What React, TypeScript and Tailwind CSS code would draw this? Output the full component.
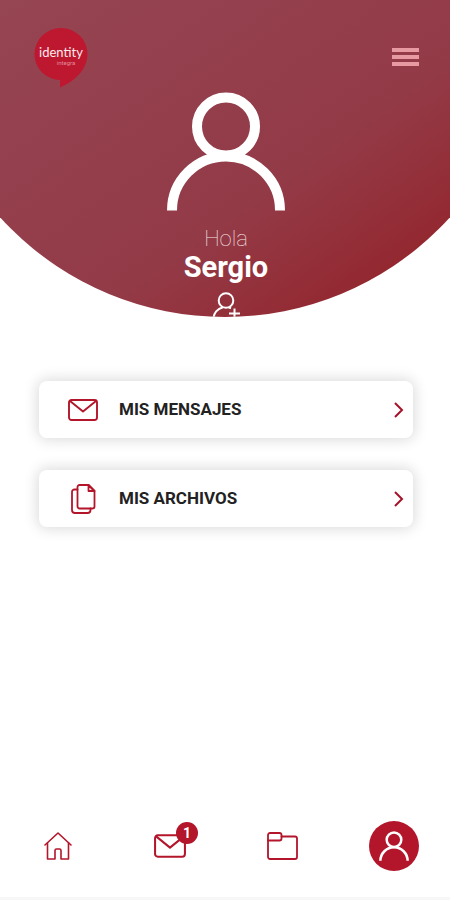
import type { ReactNode } from "react";

const MailIcon = ({ className }: { className?: string }) => (
  <svg viewBox="0 0 30 22" fill="none" stroke="currentColor" strokeWidth="1.9" strokeLinejoin="round" strokeLinecap="round" className={className} aria-hidden="true">
    <rect x="1" y="1" width="28" height="20" rx="2.5" />
    <path d="M2 2l13 10.5L28 2" />
  </svg>
);

const FilesIcon = ({ className }: { className?: string }) => (
  <svg viewBox="0 0 25 30" fill="none" stroke="currentColor" strokeWidth="1.8" strokeLinejoin="round" strokeLinecap="round" className={className} aria-hidden="true">
    <path d="M8.500 1h9l6 6v15.500a2 2 0 0 1-2 2h-13a2 2 0 0 1-2-2V3a2 2 0 0 1 2-2z" />
    <path d="M17.500 1v6h6z" />
    <path d="M6.500 5.500H3.500a2.500 2.500 0 0 0-2.500 2.500v18a3 3 0 0 0 3 3h12.500a3 3 0 0 0 3-3v-1.500" />
  </svg>
);

const HomeIcon = ({ className }: { className?: string }) => (
  <svg viewBox="0 0 28 28" fill="none" stroke="currentColor" strokeWidth="1.6" strokeLinejoin="round" strokeLinecap="round" className={className} aria-hidden="true">
    <path d="M1 13L14 1l13 12" />
    <path d="M3.500 11v16h7.500v-8.500a1.500 1.500 0 0 1 1.500-1.500h3a1.500 1.500 0 0 1 1.500 1.500V27h7.500V11" />
  </svg>
);

const FolderIcon = ({ className }: { className?: string }) => (
  <svg viewBox="0 0 31 28" fill="none" stroke="currentColor" strokeWidth="1.8" strokeLinejoin="round" strokeLinecap="round" className={className} aria-hidden="true">
    <path d="M1 8.500V3a2 2 0 0 1 2-2h9.500a2 2 0 0 1 2 2v1.500H28a2 2 0 0 1 2 2V25a2 2 0 0 1-2 2H3a2 2 0 0 1-2-2z" />
    <path d="M1 8.500h11.500a2 2 0 0 0 2-2v-2" />
  </svg>
);

const UserIcon = ({ className }: { className?: string }) => (
  <svg viewBox="0 0 118 119" fill="none" stroke="currentColor" strokeWidth="10" className={className} aria-hidden="true">
    <circle cx="59" cy="34.500" r="29" />
    <path d="M5 118.500a54 54 0 0 1 108 0" />
  </svg>
);

const AddUserIcon = ({ className }: { className?: string }) => (
  <svg viewBox="0 0 28 28" fill="none" stroke="currentColor" strokeWidth="2" className={className} aria-hidden="true">
    <circle cx="14" cy="9.500" r="7.300" />
    <path d="M1.500 28c0-6 4-10.500 9.500-11.800M16.500 16.200l2.500 1" />
    <path d="M22.500 17.500v10.500M17 22.500h11" />
  </svg>
);

const ChevronIcon = ({ className }: { className?: string }) => (
  <svg viewBox="0 0 10 16" fill="none" stroke="currentColor" strokeWidth="2" className={className} aria-hidden="true">
    <path d="M1 1l7 7-7 7" />
  </svg>
);

const Logo = () => (
  <svg viewBox="0 0 54 60" className="h-[60px] w-[54px]" role="img" aria-label="identity integra">
    <path d="M27 0a26.500 26 0 0 1 26.500 26c0 13-9 24-22.500 31l-5 2.500v-7.500C11 51 .5 40 .5 26A26.500 26 0 0 1 27 0z" fill="#be1730" />
    <text x="27" y="29" textAnchor="middle" fontSize="13" fill="#fbeaec" fontFamily="Lato, sans-serif">
      identity
    </text>
    <text x="32" y="37" textAnchor="middle" fontSize="6" fill="#e48a97" fontFamily="Roboto, sans-serif">
      integra
    </text>
  </svg>
);

const MenuCard = ({ icon, label }: { icon: ReactNode; label: string }) => (
  <li>
    <a
      href="#"
      className="flex h-[57px] items-center rounded-lg bg-white pr-[9px] pl-7 shadow-[0_0_14px_2px_rgba(0,0,0,0.14)]"
    >
      <span className="flex w-8 justify-center text-[#b3152b]">{icon}</span>
      <span className="ml-5 flex-1 text-[17px] font-bold text-[#222]">{label}</span>
      <ChevronIcon className="h-4 w-[10px] text-[#a3142a]" />
    </a>
  </li>
);

export default function App() {
  return (
    <div className="flex min-h-screen flex-col bg-white font-['Roboto',sans-serif] antialiased">
      <header className="h-[317px] overflow-hidden bg-linear-to-br from-[#964553] via-[#933a47] via-60% to-[#931a22] text-white [clip-path:ellipse(67.4%_303px_at_50%_14px)]">
        <div className="flex h-[92px] items-start justify-between pt-7 pr-[31px] pl-[34px]">
          <Logo />
          <button type="button" aria-label="Menú" className="mt-5 flex w-[27px] flex-col gap-[3px]">
            <span className="h-1 w-full bg-[#e79aa2]" />
            <span className="h-1 w-full bg-[#e79aa2]" />
            <span className="h-1 w-full bg-[#e79aa2]" />
          </button>
        </div>
        <div className="flex flex-col items-center pl-0.5">
          <UserIcon className="h-[119px] w-[118px]" />
          <p className="mt-4 text-[22px] leading-6 font-thin text-[#f8e4e6]">Hola</p>
          <h1 className="text-[29px] leading-8 font-bold">Sergio</h1>
          <button type="button" aria-label="Agregar usuario" className="mt-2">
            <AddUserIcon className="h-7 w-7" />
          </button>
        </div>
      </header>

      <main className="flex-1 pt-16 pr-[37px] pl-[39px]">
        <ul className="flex flex-col gap-8">
          <MenuCard icon={<MailIcon className="h-[22px] w-[30px]" />} label="MIS MENSAJES" />
          <MenuCard icon={<FilesIcon className="h-[30px] w-[25px]" />} label="MIS ARCHIVOS" />
        </ul>
      </main>

      <nav className="grid h-[106px] grid-cols-4 items-center justify-items-center border-b-[3px] border-[#f7f7f7] pl-0.5 text-[#b3152b]">
        <a href="#" aria-label="Inicio">
          <HomeIcon className="h-7 w-7" />
        </a>
        <a href="#" aria-label="Mensajes" className="relative">
          <MailIcon className="h-6 w-8" />
          <span className="absolute -top-3 -right-3 flex h-[22px] w-[22px] items-center justify-center rounded-full bg-[#b3152b] text-sm font-bold text-white">
            1
          </span>
        </a>
        <a href="#" aria-label="Archivos">
          <FolderIcon className="h-7 w-[31px]" />
        </a>
        <a
          href="#"
          aria-label="Perfil"
          className="flex h-[50px] w-[50px] items-center justify-center rounded-full bg-[#b3152b] text-white"
        >
          <UserIcon className="h-[30px] w-[30px]" />
        </a>
      </nav>
    </div>
  );
}
